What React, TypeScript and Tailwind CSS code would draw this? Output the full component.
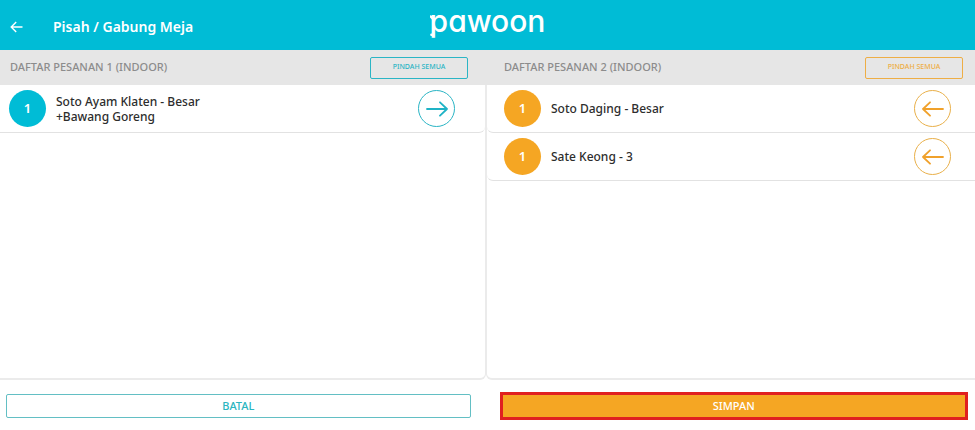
import { clsx } from "clsx";

type Order = {
  qty: number;
  name: string;
  extra?: string;
};

const leftOrders: Order[] = [
  { qty: 1, name: "Soto Ayam Klaten - Besar", extra: "+Bawang Goreng" },
];

const rightOrders: Order[] = [
  { qty: 1, name: "Soto Daging - Besar" },
  { qty: 1, name: "Sate Keong - 3" },
];

function MoveArrow({ flip }: { flip: boolean }) {
  return (
    <svg
      viewBox="0 0 22 16"
      className={clsx("h-4 w-[22px]", flip && "-scale-x-100")}
      fill="none"
      stroke="currentColor"
      strokeWidth="1.8"
      strokeLinecap="round"
      strokeLinejoin="round"
    >
      <path d="M1 8h20M14 1.3L21 8l-7 6.7" />
    </svg>
  );
}

function Logo() {
  return (
    <div className="relative text-[30px] leading-8 font-medium text-white font-['Inter',sans-serif] [font-feature-settings:'cv11']">
      pawoon
      {/* beak and foot on the p */}
      <svg
        viewBox="0 0 10 28"
        className="absolute top-1 left-0 h-7 w-[10px]"
        fill="none"
        stroke="currentColor"
        strokeWidth="2.4"
        strokeLinecap="round"
      >
        <path d="M0.8 7.5l2.7 3" />
        <path d="M1.4 25.8h1.6" />
      </svg>
    </div>
  );
}

function OrderPanel({
  title,
  orders,
  side,
}: {
  title: string;
  orders: Order[];
  side: "left" | "right";
}) {
  const isLeft = side === "left";
  return (
    <section className="flex flex-col">
      <div
        className={clsx(
          "flex h-[35px] items-center justify-between bg-[#e6e6e6]",
          isLeft ? "pr-[18px] pl-[10px]" : "pr-3 pl-[18px]"
        )}
      >
        <h2 className="text-[11px] font-medium text-[#8c8c8c]">{title}</h2>
        <button
          className={clsx(
            "h-[22px] w-[98px] rounded-xs border text-[7px] font-medium",
            isLeft
              ? "border-[#2bb5c5] text-[#2bb5c5]"
              : "border-[#eeae45] text-[#eeae45]"
          )}
        >
          PINDAH SEMUA
        </button>
      </div>
      <div
        className={clsx(
          "flex-1 border-b-2 border-[#ebebeb] bg-white",
          isLeft ? "rounded-br-md border-r" : "rounded-bl-md border-l"
        )}
      >
        <ul>
          {orders.map((order) => (
            <li
              key={order.name}
              className={clsx(
                "flex h-12 items-center border-b border-[#e2e2e2]",
                isLeft
                  ? "rounded-r-md pr-[30px] pl-[9px]"
                  : "rounded-l-md pr-6 pl-[17px]"
              )}
            >
              <span
                className={clsx(
                  "flex size-[37px] items-center justify-center rounded-full text-[13px] font-semibold text-white",
                  isLeft ? "bg-[#00bcd6]" : "bg-[#f5a623]"
                )}
              >
                {order.qty}
              </span>
              <span className="ml-[10px] flex-1 text-xs leading-[15px] font-medium text-[#2d2d2d]">
                {order.name}
                {order.extra && <span className="block">{order.extra}</span>}
              </span>
              <button
                aria-label="Pindah"
                className={clsx(
                  "flex size-[37px] items-center justify-center rounded-full border",
                  isLeft
                    ? "border-[#2bb5c5] text-[#1fb3c6]"
                    : "border-[#e9b04a] text-[#f0a12b]"
                )}
              >
                <MoveArrow flip={!isLeft} />
              </button>
            </li>
          ))}
        </ul>
      </div>
    </section>
  );
}

export default function App() {
  return (
    <div className="flex min-h-screen flex-col bg-white font-['Noto_Sans',sans-serif]">
      <header className="grid h-[50px] grid-cols-[1fr_auto_1fr] items-center bg-[#00bcd6] text-white">
        <div className="flex items-center pt-[3px] pl-[10px]">
          <button aria-label="Kembali">
            <svg
              viewBox="0 0 13 12"
              className="h-3 w-[13px]"
              fill="none"
              stroke="currentColor"
              strokeWidth="1.4"
            >
              <path d="M12.5 6H1.2M6.2 1L1.2 6l5 5" />
            </svg>
          </button>
          <h1 className="ml-[30px] text-sm font-semibold">
            Pisah / Gabung Meja
          </h1>
        </div>
        <div className="pb-2">
          <Logo />
        </div>
      </header>
      <main className="grid flex-1 grid-cols-[486fr_489fr]">
        <OrderPanel
          title="DAFTAR PESANAN 1 (INDOOR)"
          orders={leftOrders}
          side="left"
        />
        <OrderPanel
          title="DAFTAR PESANAN 2 (INDOOR)"
          orders={rightOrders}
          side="right"
        />
      </main>
      <footer className="flex gap-[29px] pt-3 pr-[7px] pb-[10px] pl-[6px] text-[11px] font-medium">
        <button className="my-[2px] h-6 flex-1 rounded-xs border border-[#63bfc4] text-[#2bb5c0]">
          BATAL
        </button>
        <button className="h-7 flex-1 border-3 border-[#e02020] bg-[#f5a623] text-white">
          SIMPAN
        </button>
      </footer>
    </div>
  );
}
